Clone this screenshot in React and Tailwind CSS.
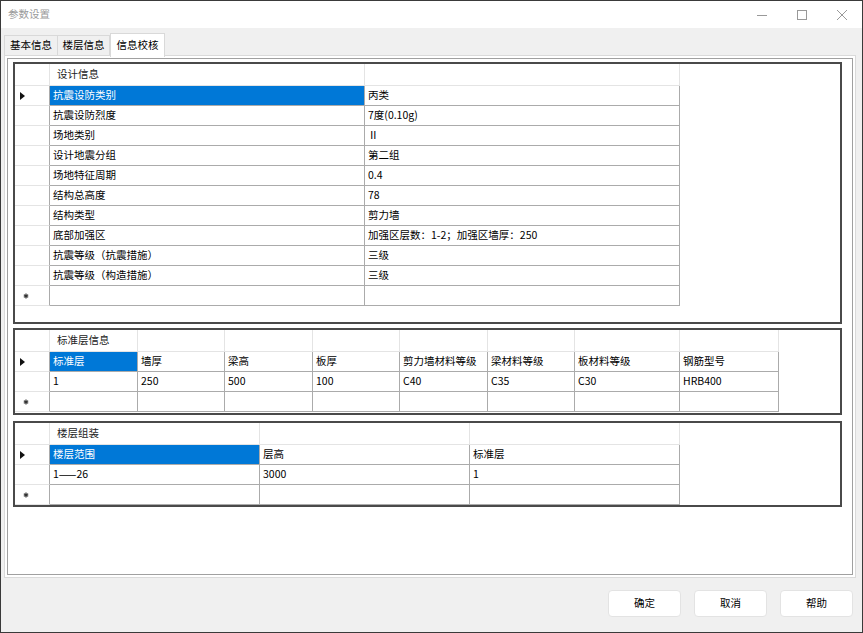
import React from "react";

const rows1 = [
  ["抗震设防类别", "丙类"],
  ["抗震设防烈度", "7度(0.10g)"],
  ["场地类别", "Ⅱ"],
  ["设计地震分组", "第二组"],
  ["场地特征周期", "0.4"],
  ["结构总高度", "78"],
  ["结构类型", "剪力墙"],
  ["底部加强区", "加强区层数：1-2；加强区墙厚：250"],
  ["抗震等级（抗震措施）", "三级"],
  ["抗震等级（构造措施）", "三级"],
];

const rows2 = [
  ["标准层", "墙厚", "梁高", "板厚", "剪力墙材料等级", "梁材料等级", "板材料等级", "钢筋型号"],
  ["1", "250", "500", "100", "C40", "C35", "C30", "HRB400"],
];

const rows3 = [
  ["楼层范围", "层高", "标准层"],
  ["1——26", "3000", "1"],
];

function Arrow() {
  return (
    <svg width="5" height="8" viewBox="0 0 5 8" className="ml-[5px]">
      <polygon points="0,0 5,4 0,8" fill="#111" />
    </svg>
  );
}

function Star() {
  return (
    <svg width="6" height="6" viewBox="0 0 6 6" className="ml-[8px]">
      <path d="M3 0.5V5.5M0.8 1.7L5.2 4.3M5.2 1.7L0.8 4.3" stroke="#333" strokeWidth="1.2" />
    </svg>
  );
}

function Grid({ cols, title, rows, boxClass }) {
  return (
    <div className={`border-2 border-[#4a4a4a] bg-white ${boxClass}`}>
      {/* header row */}
      <div className="flex h-[22px]">
        <div className="w-[35px] shrink-0 border-r border-b border-[#e4e4e4]" />
        {cols.map((c, i) => (
          <div
            key={i}
            className={`${c} shrink-0 border-r border-b border-[#e4e4e4] flex items-center pl-[7px] text-[#222]`}
          >
            {i === 0 ? title : ""}
          </div>
        ))}
      </div>
      {rows.map((r, ri) => (
        <div key={ri} className="flex h-[20px]">
          <div className="w-[35px] shrink-0 border-r border-r-[#ababab] border-b border-b-[#e4e4e4] flex items-center">
            {ri === 0 ? <Arrow /> : null}
          </div>
          {cols.map((c, i) => {
            const sel = ri === 0 && i === 0;
            return (
              <div
                key={i}
                className={`${c} shrink-0 border-r border-b border-[#ababab] flex items-center pl-[3px] whitespace-nowrap overflow-hidden ${
                  sel ? "bg-[#0078d7] text-white" : "text-black"
                }`}
              >
                {r[i]}
              </div>
            );
          })}
        </div>
      ))}
      <div className="flex h-[20px]">
        <div className="w-[35px] shrink-0 border-r border-r-[#ababab] border-b border-b-[#e4e4e4] flex items-center">
          <Star />
        </div>
        {cols.map((c, i) => (
          <div key={i} className={`${c} shrink-0 border-r border-b border-[#ababab]`} />
        ))}
      </div>
    </div>
  );
}

export default function App() {
  return (
    <div className="w-[863px] h-[633px] border border-[#3a3a3a] bg-[#f0f0f0] flex flex-col text-[10.5px] leading-none font-['Noto_Sans_CJK_SC','Microsoft_YaHei',sans-serif] overflow-hidden">
      {/* title bar */}
      <div className="h-[27px] bg-white flex items-center shrink-0">
        <div className="pl-[7px] flex-1 text-[#9a9a9a]">参数设置</div>
        <div className="flex h-full">
          <div className="w-[40px] flex items-center justify-center">
            <svg width="10" height="10" viewBox="0 0 10 10">
              <line x1="0" y1="5.5" x2="10" y2="5.5" stroke="#999" strokeWidth="1" />
            </svg>
          </div>
          <div className="w-[40px] flex items-center justify-center">
            <svg width="10" height="10" viewBox="0 0 10 10">
              <rect x="0.5" y="0.5" width="9" height="9" fill="none" stroke="#999" strokeWidth="1" />
            </svg>
          </div>
          <div className="w-[40px] flex items-center justify-center">
            <svg width="10" height="10" viewBox="0 0 10 10">
              <path d="M0 0L10 10M10 0L0 10" stroke="#999" strokeWidth="1" />
            </svg>
          </div>
        </div>
      </div>

      {/* tabs */}
      <div className="pl-[3px] h-[27px] flex items-end shrink-0">
        <div className="w-[54px] h-[20px] border border-b-0 border-[#d9d9d9] flex items-center justify-center text-black">
          基本信息
        </div>
        <div className="w-[52px] h-[20px] border border-l-0 border-b-0 border-[#d9d9d9] flex items-center justify-center text-black">
          楼层信息
        </div>
        <div className="relative z-10 -mb-[2px] w-[55px] h-[24px] bg-white border border-b-0 border-[#d9d9d9] flex items-center justify-center text-black">
          信息校核
        </div>
      </div>

      {/* tab page */}
      <div className="ml-[3px] w-[852px] h-[523px] border border-[#dadada] bg-white p-[2px] shrink-0">
        <div className="h-full border border-[#a0a0a0] pl-[5px] pt-[3px] flex flex-col">
          <Grid
            boxClass="w-[829px] h-[262px]"
            title="设计信息"
            cols={["w-[315px]", "w-[315px]"]}
            rows={rows1}
          />
          <Grid
            boxClass="w-[829px] h-[87px] mt-[4px]"
            title="标准层信息"
            cols={[
              "w-[88px]",
              "w-[87px]",
              "w-[88px]",
              "w-[87px]",
              "w-[88px]",
              "w-[87px]",
              "w-[105px]",
              "w-[99px]",
            ]}
            rows={rows2}
          />
          <Grid
            boxClass="w-[829px] h-[86px] mt-[6px]"
            title="楼层组装"
            cols={["w-[210px]", "w-[210px]", "w-[210px]"]}
            rows={rows3}
          />
        </div>
      </div>

      {/* buttons */}
      <div className="flex justify-end gap-[13px] pr-[9px] mt-[12px]">
        {["确定", "取消", "帮助"].map((t) => (
          <div
            key={t}
            className="w-[73px] h-[27px] bg-white border border-[#e3e3e3] rounded-[4px] flex items-center justify-center text-black"
          >
            {t}
          </div>
        ))}
      </div>
    </div>
  );
}
